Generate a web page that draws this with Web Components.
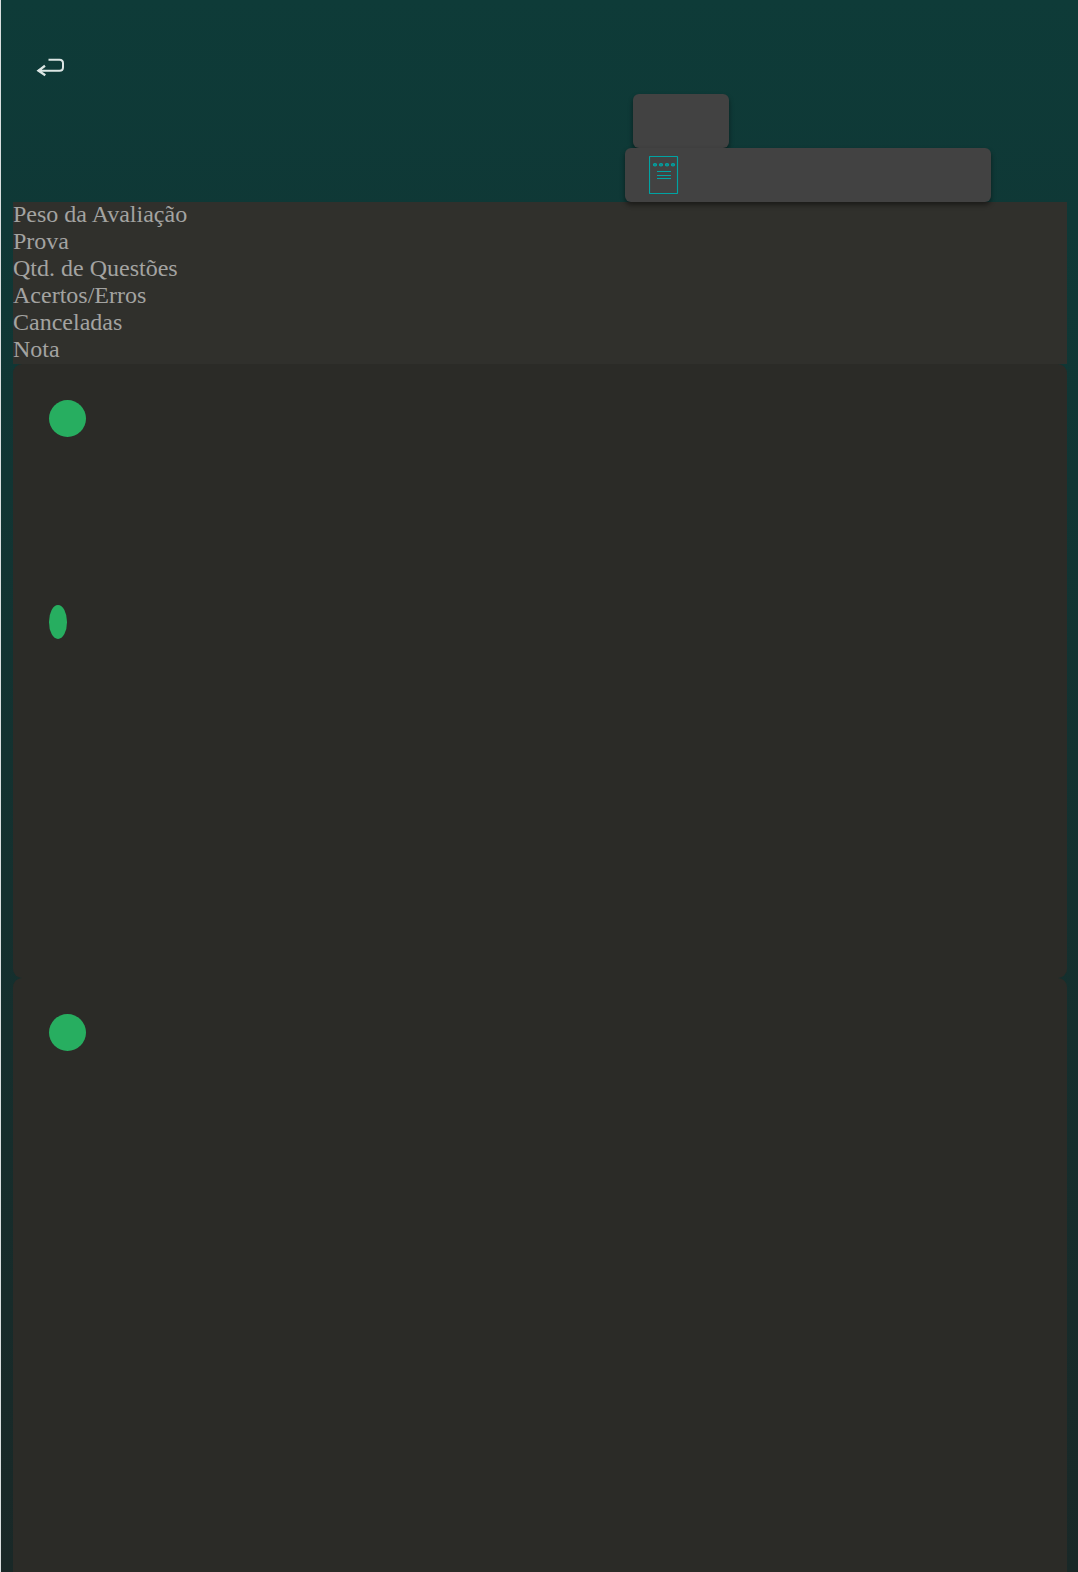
<!DOCTYPE html>
<html lang="pt-BR">
<head>
<meta charset="UTF-8">
<title>Notas</title>
<style>
    html { background-color: #d9dfdf; }
    body {
        margin: 0;
        height: 1572px;
        overflow: hidden;
        font-family: "Liberation Serif", "Times New Roman", serif;
    }
</style>
</head>
<body>
<grades-page>
    <page-header slot="header"></page-header>
    <table-head labels="Peso da Avaliação|Prova|Qtd. de Questões|Acertos/Erros|Canceladas|Nota"></table-head>
    <grade-card>
        <status-dot></status-dot>
        <status-dot shape="narrow"></status-dot>
    </grade-card>
    <grade-card>
        <status-dot></status-dot>
    </grade-card>
</grades-page>

<script>
class GradesPage extends HTMLElement {
    constructor() {
        super();
        this.attachShadow({mode: 'open'});
    }

    connectedCallback() {
        this.shadowRoot.innerHTML = `
        <style>
            :host {
                display: block;
                box-sizing: border-box;
                height: 1572px;
                margin-left: 1px;
                overflow: hidden;
                background: linear-gradient(#0e3b38, #0f3836 14%, #192827);
            }
            main {
                padding: 0 11px 0 12px;
            }
        </style>
        <slot name="header"></slot>
        <main><slot></slot></main>
        `;
    }
}

class PageHeader extends HTMLElement {
    constructor() {
        super();
        this.attachShadow({mode: 'open'});
    }

    connectedCallback() {
        this.shadowRoot.innerHTML = `
        <style>
            :host {
                display: flex;
                justify-content: space-between;
                box-sizing: border-box;
                height: 202px;
                padding: 0 87px 0 35px;
                position: relative;
            }
            .back {
                width: 30px;
                height: 20px;
                margin-top: 57px;
            }
            .actions {
                display: flex;
                flex-direction: column;
                margin-top: 94px;
            }
            .box {
                box-sizing: border-box;
                height: 54px;
                border-radius: 6px;
                background-color: #424242;
                box-shadow: 0 3px 5px rgba(0, 0, 0, .45);
            }
            .small {
                width: 96px;
                margin-left: 7.5px;
            }
            .wide {
                width: 366px;
                padding: 8px 24px;
            }
            svg {
                display: block;
            }
        </style>
        <svg class="back" viewBox="0 0 30 20" fill="none" stroke="#dce6e4" stroke-width="2">
            <path d="M12.5 2.8H23.5q3.5 0 3.5 3.5v4q0 3.5-3.5 3.5H3"/>
            <path d="M9 8.8 2.5 13.6l6.8 4.6" stroke-width="2.3"/>
            <path d="M1 13.6l5-3.2v6.2z" fill="#dce6e4" stroke="none"/>
        </svg>
        <div class="actions">
            <div class="box small"></div>
            <div class="box wide">
                <svg width="30" height="38" viewBox="0 0 30 38" fill="none" stroke="#00a3a3" stroke-width="1.15">
                    <rect x=".5" y=".5" width="28" height="37" rx=".6"/>
                    <g fill="#177f7f">
                        <ellipse cx="6" cy="8.8" rx="1.6" ry="1.2"/>
                        <ellipse cx="12" cy="8.8" rx="1.6" ry="1.2"/>
                        <ellipse cx="18" cy="8.8" rx="1.6" ry="1.2"/>
                        <ellipse cx="24" cy="8.8" rx="1.6" ry="1.2"/>
                    </g>
                    <path d="M8 15.5h14M8 19.5h14M8 22.5h14"/>
                </svg>
            </div>
        </div>
        `;
    }
}

class TableHead extends HTMLElement {
    constructor() {
        super();
        this.attachShadow({mode: 'open'});
    }

    connectedCallback() {
        this.shadowRoot.innerHTML = `
        <style>
            :host {
                display: block;
                background-color: #30302c;
                color: #a3a3a1;
                font-size: 24px;
                line-height: 25px;
            }
            div {
                padding-bottom: 2px;
            }
        </style>
        `;

        this.getAttribute('labels').split('|').forEach(label => {
            const div = document.createElement('div');
            div.appendChild(document.createTextNode(label));
            this.shadowRoot.appendChild(div);
        });
    }
}

class GradeCard extends HTMLElement {
    constructor() {
        super();
        this.attachShadow({mode: 'open'});
    }

    connectedCallback() {
        this.shadowRoot.innerHTML = `
        <style>
            :host {
                display: flex;
                flex-direction: column;
                gap: 168px;
                box-sizing: border-box;
                height: 613.5px;
                padding: 36px;
                border-radius: 9px;
                background-color: #2b2b27;
            }
        </style>
        <slot></slot>
        `;
    }
}

class StatusDot extends HTMLElement {
    constructor() {
        super();
        this.attachShadow({mode: 'open'});
    }

    connectedCallback() {
        this.shadowRoot.innerHTML = `
        <style>
            :host {
                display: block;
                width: 37.4px;
                height: 37.4px;
                border-radius: 50%;
                background-color: #27ae60;
            }
            :host([shape="narrow"]) {
                width: 18px;
                height: 33.4px;
            }
        </style>
        `;
    }
}

customElements.define('grades-page', GradesPage);
customElements.define('page-header', PageHeader);
customElements.define('table-head', TableHead);
customElements.define('grade-card', GradeCard);
customElements.define('status-dot', StatusDot);
</script>
</body>
</html>
